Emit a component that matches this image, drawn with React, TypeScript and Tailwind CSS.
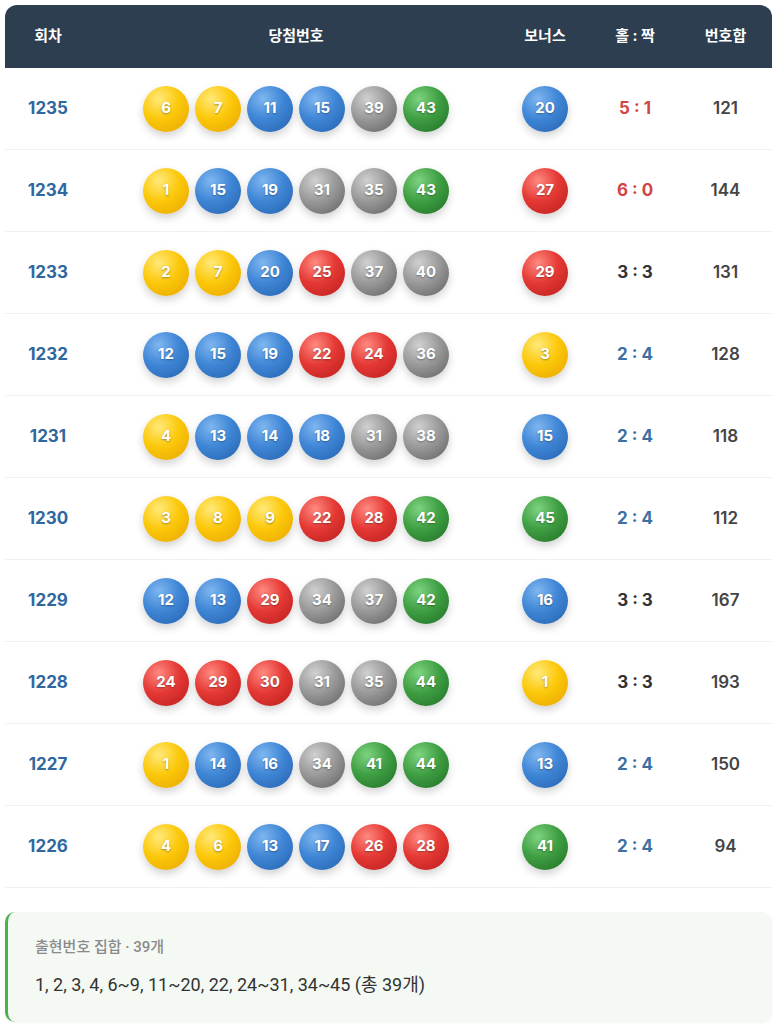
const rows = [
  { no: 1235, nums: [6, 7, 11, 15, 39, 43], bonus: 20, oe: "5 : 1", sum: 121 },
  { no: 1234, nums: [1, 15, 19, 31, 35, 43], bonus: 27, oe: "6 : 0", sum: 144 },
  { no: 1233, nums: [2, 7, 20, 25, 37, 40], bonus: 29, oe: "3 : 3", sum: 131 },
  { no: 1232, nums: [12, 15, 19, 22, 24, 36], bonus: 3, oe: "2 : 4", sum: 128 },
  { no: 1231, nums: [4, 13, 14, 18, 31, 38], bonus: 15, oe: "2 : 4", sum: 118 },
  { no: 1230, nums: [3, 8, 9, 22, 28, 42], bonus: 45, oe: "2 : 4", sum: 112 },
  { no: 1229, nums: [12, 13, 29, 34, 37, 42], bonus: 16, oe: "3 : 3", sum: 167 },
  { no: 1228, nums: [24, 29, 30, 31, 35, 44], bonus: 1, oe: "3 : 3", sum: 193 },
  { no: 1227, nums: [1, 14, 16, 34, 41, 44], bonus: 13, oe: "2 : 4", sum: 150 },
  { no: 1226, nums: [4, 6, 13, 17, 26, 28], bonus: 41, oe: "2 : 4", sum: 94 },
];

function ballClass(n: number) {
  if (n <= 10)
    return "bg-[radial-gradient(circle_at_35%_28%,#ffe97a_0%,#fcc80a_45%,#e6a400_100%)]";
  if (n <= 20)
    return "bg-[radial-gradient(circle_at_35%_28%,#7fb6f0_0%,#3f86d6_45%,#2461ad_100%)]";
  if (n <= 30)
    return "bg-[radial-gradient(circle_at_35%_28%,#ff8a80_0%,#e53935_45%,#b71c1c_100%)]";
  if (n <= 40)
    return "bg-[radial-gradient(circle_at_35%_28%,#d0d0d0_0%,#9a9a9a_45%,#5f5f5f_100%)]";
  return "bg-[radial-gradient(circle_at_35%_28%,#7dd37f_0%,#3f9f43_45%,#1f6e25_100%)]";
}

function Ball({ n }: { n: number }) {
  return (
    <div
      className={`flex h-[46px] w-[46px] items-center justify-center rounded-full text-[15px] font-bold text-white shadow-[0_4px_8px_rgba(0,0,0,0.18)] [text-shadow:0_1px_2px_rgba(0,0,0,0.35)] ${ballClass(n)}`}
    >
      {n}
    </div>
  );
}

function oeColor(oe: string) {
  if (oe === "5 : 1" || oe === "6 : 0") return "text-[#d04545]";
  if (oe === "3 : 3") return "text-[#333333]";
  return "text-[#3d6fa3]";
}

export default function App() {
  return (
    <div className="min-h-[1024px] bg-white px-[5px] pt-[5px] font-['Inter','Noto_Sans_CJK_KR',sans-serif]">
      <div className="grid grid-cols-[86px_410px_88px_92px_89px] h-[63px] items-center rounded-t-[12px] bg-[#2d3e50] text-[15px] font-bold text-white">
        <div className="text-center">회차</div>
        <div className="text-center">당첨번호</div>
        <div className="text-center">보너스</div>
        <div className="text-center">홀 : 짝</div>
        <div className="text-center">번호합</div>
      </div>
      {rows.map((r) => (
        <div
          key={r.no}
          className="grid h-[82px] grid-cols-[86px_410px_88px_92px_89px] items-center border-b border-[#f0f0f0]"
        >
          <div className="text-center text-[17px] font-bold text-[#2f679f]">{r.no}</div>
          <div className="flex justify-center gap-[6px]">
            {r.nums.map((n) => (
              <Ball key={n} n={n} />
            ))}
          </div>
          <div className="flex justify-center">
            <Ball n={r.bonus} />
          </div>
          <div className={`text-center text-[17px] font-bold ${oeColor(r.oe)}`}>{r.oe}</div>
          <div className="text-center text-[17px] font-semibold text-[#444444]">{r.sum}</div>
        </div>
      ))}
      <div className="mt-[24px] rounded-[10px] border-l-[3px] border-[#4caf50] bg-[#f4f9f4] pl-[27px] pr-[20px] pt-[24px] pb-[24px] font-['Roboto','Noto_Sans_CJK_KR',sans-serif] shadow-[0_1px_3px_rgba(0,0,0,0.05)]">
        <div className="text-[15px] font-medium text-[#8a8a8a]">출현번호 집합 · 39개</div>
        <div className="mt-[12px] text-[18px] text-[#333333]">
          1, 2, 3, 4, 6~9, 11~20, 22, 24~31, 34~45 (총 39개)
        </div>
      </div>
    </div>
  );
}
